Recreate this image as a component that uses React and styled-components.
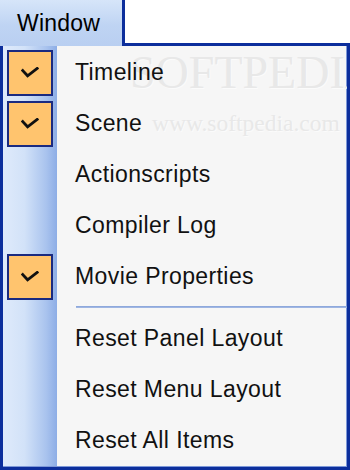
import React from "react";
import styled, { createGlobalStyle } from "styled-components";

const GlobalStyle = createGlobalStyle`
  html, body { margin: 0; padding: 0; background: #ffffff; }
  body { font-family: Tahoma, "Liberation Sans", Arial, sans-serif; }
`;

const Screen = styled.div`
  width: 350px;
  height: 470px;
  overflow: hidden;
  display: flex;
  flex-direction: column;
  background: #ffffff;
`;

const MenuBar = styled.div`
  height: 43px;
  display: flex;
  align-items: flex-start;
`;

const Tab = styled.div`
  position: relative;
  z-index: 1;
  box-sizing: border-box;
  width: 125px;
  height: 46px;
  padding-left: 17px;
  padding-top: 10px;
  border-right: 3px solid #0c2e9c;
  background: linear-gradient(to bottom, #d6e5f9 0%, #bfd4f3 55%, #b9cff1 100%);
  font-family: Tahoma, "Liberation Sans", Arial, sans-serif;
  font-size: 23px;
  letter-spacing: 0.2px;
  color: #000;
`;

const Menu = styled.div`
  position: relative;
  box-sizing: border-box;
  width: 350px;
  height: 427px;
  border: 3px solid #0c2e9c;
  padding: 1px 0 1px 0;
  box-shadow: inset -1px -1px 0 #7d98d8;
  background:
    linear-gradient(to right, #dfeafb 0%, #d2e2f8 40%, #a9c3ee 80%, #8dade6 100%) no-repeat 0 0 / 54px 100%,
    #f6f6f6;
  display: flex;
  flex-direction: column;
  overflow: hidden;
`;

const Row = styled.div`
  display: grid;
  grid-template-columns: 54px 1fr;
  align-items: center;
  height: 51px;
  position: relative;
  z-index: 1;
`;

const IconCell = styled.div`
  display: flex;
  align-items: center;
  padding-left: 4px;
  height: 100%;
`;

const CheckBox = styled.div`
  box-sizing: border-box;
  width: 46px;
  height: 46px;
  border: 2px solid #1a2a80;
  background: #ffc46e;
  display: flex;
  align-items: center;
  justify-content: center;
`;

const Label = styled.span`
  padding-left: 18px;
  font-family: Tahoma, "Liberation Sans", Arial, sans-serif;
  font-size: 23px;
  letter-spacing: 0.4px;
  color: #111;
  white-space: nowrap;
`;

const Separator = styled.div`
  height: 11px;
  display: flex;
  align-items: center;
  padding-left: 73px;
  position: relative;
  z-index: 1;
  &::after {
    content: "";
    flex: 1;
    height: 2px;
    margin-top: -2px;
    background: linear-gradient(to bottom, #86a2d8, #a8bde6);
  }
`;

const Watermark = styled.div`
  position: absolute;
  left: ${(p) => p.$x}px;
  top: ${(p) => p.$y}px;
  font-family: "Liberation Serif", "DejaVu Serif", serif;
  font-size: ${(p) => p.$size}px;
  letter-spacing: ${(p) => p.$spacing}px;
  color: #e8e8e8;
  text-shadow: 1px 1px 0 #fbfbfb;
  white-space: nowrap;
  z-index: 0;
`;

const Check = () => (
  <svg width="18" height="12" viewBox="0 0 18 12">
    <path d="M1.8 3.6 L6.6 8.8 L16.2 1.4" fill="none" stroke="#111" strokeWidth="2.8" strokeLinecap="square" />
  </svg>
);

const top = [
  { label: "Timeline", checked: true },
  { label: "Scene", checked: true },
  { label: "Actionscripts", checked: false },
  { label: "Compiler Log", checked: false },
  { label: "Movie Properties", checked: true },
];

const bottom = [
  { label: "Reset Panel Layout" },
  { label: "Reset Menu Layout" },
  { label: "Reset All Items" },
];

const Item = ({ label, checked }) => (
  <Row>
    <IconCell>{checked && <CheckBox><Check /></CheckBox>}</IconCell>
    <Label>{label}</Label>
  </Row>
);

export default function App() {
  return (
    <>
      <GlobalStyle />
      <Screen>
        <MenuBar>
          <Tab>Window</Tab>
        </MenuBar>
        <Menu>
          <Watermark $x={127} $y={0} $size={46} $spacing={0}>SOFTPEDIA</Watermark>
          <Watermark $x={149} $y={64} $size={23.5} $spacing={0}>www.softpedia.com</Watermark>
          {top.map((it) => (
            <Item key={it.label} {...it} />
          ))}
          <Separator />
          {bottom.map((it) => (
            <Item key={it.label} {...it} />
          ))}
        </Menu>
      </Screen>
    </>
  );
}
